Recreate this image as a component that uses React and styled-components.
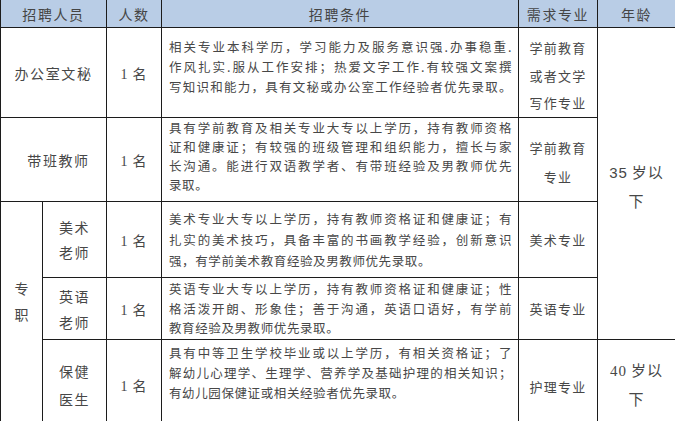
import React from "react";
import styled, { createGlobalStyle } from "styled-components";

const Global = createGlobalStyle`
  html, body { margin: 0; padding: 0; background: #ffffff; overflow: hidden; }
  body { font-family: "Noto Sans CJK SC", "Noto Sans", sans-serif; }
`;

const Table = styled.div`
  display: grid;
  width: 675px;
  grid-template-columns: 41px 63px 54px 356px 78px 1fr;
  grid-template-rows: 27px 89px 83px 75px 61px 89px;
  gap: 1px;
  padding-left: 1px;
  box-sizing: border-box;
  background: #1c1c1c;
  color: #474747;
`;

const Cell = styled.div`
  grid-column: ${(p) => p.$col};
  grid-row: ${(p) => p.$row};
  background: #ffffff;
  display: flex;
  flex-direction: column;
  align-items: center;
  justify-content: center;
  text-align: center;
  box-sizing: border-box;
`;

const HeadCell = styled(Cell)`
  background: #b9cde6;
  font-size: 14px;
  letter-spacing: 1.6px;
  color: #454545;
  padding-top: 1px;
`;

const NameCell = styled(Cell)`
  font-size: 14px;
  letter-spacing: 1.6px;
  line-height: ${(p) => p.$lh || "20px"};
  padding-left: ${(p) => p.$pl || "0px"};
`;

const SideCell = styled(Cell)`
  justify-content: flex-start;
  padding-top: 73px;
  font-size: 14px;
  line-height: 26px;
`;

const CountCell = styled(Cell)`
  font-size: 14px;
  font-family: "Liberation Serif", "Noto Sans CJK SC", serif;
  letter-spacing: 1px;
`;

const CountName = styled.span`
  font-family: "Noto Sans CJK SC", sans-serif;
  margin-left: 4px;
`;

const ReqCell = styled(Cell)`
  align-items: stretch;
  justify-content: ${(p) => (p.$top ? "flex-start" : "center")};
  padding: ${(p) => p.$pt || "0px"} 6px 0 7px;
  font-size: 12.5px;
  letter-spacing: 0.6px;
  line-height: ${(p) => p.$lh || "20px"};
  text-align: left;
`;

const Line = styled.div`
  white-space: nowrap;
  text-align: ${(p) => (p.$full ? "justify" : "left")};
  text-align-last: ${(p) => (p.$full ? "justify" : "left")};
`;

const MajorCell = styled(Cell)`
  font-size: 13px;
  letter-spacing: 1.2px;
  line-height: ${(p) => p.$lh || "20px"};
  padding-top: ${(p) => p.$pt || "0px"};
`;

const AgeCell = styled(Cell)`
  font-size: 15px;
  line-height: 28px;
  letter-spacing: 1px;
  padding-top: ${(p) => p.$pt || "0px"};
`;

const Num = styled.span`
  font-family: ${(p) =>
    p.$serif ? '"Liberation Serif", serif' : '"Liberation Sans", sans-serif'};
  margin-right: 4px;
`;

const rows = [
  {
    row: 2,
    pt: "9px",
    lh: "20px",
    top: true,
    lines: [
      ["相关专业本科学历，学习能力及服务意识强.办事稳重.", true],
      ["作风扎实.服从工作安排；热爱文字工作.有较强文案撰", true],
      ["写知识和能力，具有文秘或办公室工作经验者优先录取。", true],
    ],
  },
  {
    row: 3,
    pt: "0px",
    lh: "19px",
    top: true,
    lines: [
      ["具有学前教育及相关专业大专以上学历，持有教师资格", true],
      ["证和健康证；有较强的班级管理和组织能力，擅长与家", true],
      ["长沟通。能进行双语教学者、有带班经验及男教师优先", true],
      ["录取。", false],
    ],
  },
  {
    row: 4,
    pt: "0px",
    lh: "21px",
    lines: [
      ["美术专业大专以上学历，持有教师资格证和健康证；有", true],
      ["扎实的美术技巧，具备丰富的书画教学经验，创新意识", true],
      ["强，有学前美术教育经验及男教师优先录取。", false],
    ],
  },
  {
    row: 5,
    pt: "0px",
    lh: "19.5px",
    lines: [
      ["英语专业大专以上学历，持有教师资格证和健康证；性", true],
      ["格活泼开朗、形象佳；善于沟通，英语口语好，有学前", true],
      ["教育经验及男教师优先录取。", false],
    ],
  },
  {
    row: 6,
    pt: "3px",
    lh: "20px",
    top: true,
    lines: [
      ["具有中等卫生学校毕业或以上学历，有相关资格证；了", true],
      ["解幼儿心理学、生理学、营养学及基础护理的相关知识；", true],
      ["有幼儿园保健证或相关经验者优先录取。", false],
    ],
  },
];

export default function App() {
  return (
    <>
      <Global />
      <Table>
        <HeadCell $col="1 / 3" $row="1">招聘人员</HeadCell>
        <HeadCell $col="3" $row="1">人数</HeadCell>
        <HeadCell $col="4" $row="1">招聘条件</HeadCell>
        <HeadCell $col="5" $row="1">需求专业</HeadCell>
        <HeadCell $col="6" $row="1">年龄</HeadCell>

        <NameCell $col="1 / 3" $row="2">办公室文秘</NameCell>
        <NameCell $col="1 / 3" $row="3" $pl="10px">带班教师</NameCell>
        <SideCell $col="1" $row="4 / 7">
          <div>专</div>
          <div>职</div>
        </SideCell>
        <NameCell $col="2" $row="4" $lh="25px">
          <div>美术</div>
          <div>老师</div>
        </NameCell>
        <NameCell $col="2" $row="5" $lh="26px">
          <div>英语</div>
          <div>老师</div>
        </NameCell>
        <NameCell $col="2" $row="6" $lh="28px">
          <div>保健</div>
          <div>医生</div>
        </NameCell>

        {[2, 3, 4, 5, 6].map((r) => (
          <CountCell key={r} $col="3" $row={String(r)}>
            <div>
              1<CountName>名</CountName>
            </div>
          </CountCell>
        ))}

        {rows.map((r) => (
          <ReqCell
            key={r.row}
            $col="4"
            $row={String(r.row)}
            $pt={r.pt}
            $lh={r.lh}
            $top={r.top}
          >
            {r.lines.map(([t, full], i) => (
              <Line key={i} $full={full}>
                {t}
              </Line>
            ))}
          </ReqCell>
        ))}

        <MajorCell $col="5" $row="2" $lh="27.5px" $pt="6px">
          <div>学前教育</div>
          <div>或者文学</div>
          <div>写作专业</div>
        </MajorCell>
        <MajorCell $col="5" $row="3" $lh="29px" $pt="4px">
          <div>学前教育</div>
          <div>专业</div>
        </MajorCell>
        <MajorCell $col="5" $row="4">美术专业</MajorCell>
        <MajorCell $col="5" $row="5">英语专业</MajorCell>
        <MajorCell $col="5" $row="6" $pt="4px">护理专业</MajorCell>

        <AgeCell $col="6" $row="2 / 6" $pt="6px">
          <div>
            <Num>35</Num>岁以
          </div>
          <div>下</div>
        </AgeCell>
        <AgeCell $col="6" $row="6">
          <div>
            <Num $serif>40</Num>岁以
          </div>
          <div>下</div>
        </AgeCell>
      </Table>
    </>
  );
}
